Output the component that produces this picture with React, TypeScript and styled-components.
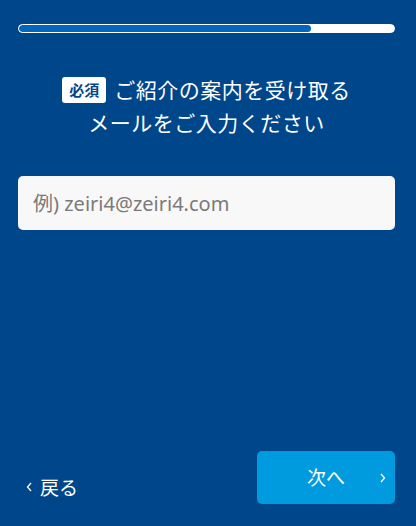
import React from 'react'
import styled, { createGlobalStyle } from 'styled-components'

const GlobalStyle = createGlobalStyle`
  html, body {
    margin: 0;
    padding: 0;
    background: #00468a;
  }
  * {
    box-sizing: border-box;
  }
`

const Page = styled.div`
  height: 526px;
  display: flex;
  flex-direction: column;
  padding: 24px 21px 22px 18px;
  background: #00468a;
  font-family: "Noto Sans", "Noto Sans CJK JP", sans-serif;
  color: #fff;
`
const Progress = styled.div`
  height: 9px;
  border-radius: 5px;
  background: #fff;
  border: 1px solid #fff;
  overflow: hidden;
`
const ProgressFill = styled.div`
  height: 100%;
  border-radius: 4px;
  background: #0066c0;
`
const Heading = styled.h1`
  margin: 41px 0 0;
  text-align: center;
  font-size: 21px;
  font-weight: 400;
  line-height: 33px;
  letter-spacing: 0.5px;
`
const Badge = styled.span`
  display: inline-block;
  vertical-align: 2px;
  margin-right: 8px;
  padding: 0 7px;
  height: 26px;
  line-height: 26px;
  border-radius: 3px;
  background: #fff;
  color: #00468a;
  font-size: 15px;
  font-weight: 700;
  letter-spacing: 0;
`
const EmailInput = styled.input`
  margin-top: 36px;
  width: 100%;
  height: 54px;
  border: none;
  border-radius: 5px;
  background: #f8f8f8;
  padding: 0 15px;
  font-family: "Noto Sans", "Noto Sans CJK JP", sans-serif;
  font-size: 20px;
  color: #333;
  outline: none;
  &::placeholder {
    color: #7a7a7a;
  }
`
const Spacer = styled.div`
  flex: 1;
`
const Footer = styled.div`
  display: flex;
  justify-content: space-between;
  align-items: flex-end;
`
const BackLink = styled.a`
  display: flex;
  align-items: center;
  gap: 8px;
  padding: 0 0 3px 8px;
  font-size: 19px;
  color: #fff;
  text-decoration: none;
`
const NextButton = styled.button`
  position: relative;
  width: 138px;
  height: 53px;
  border: none;
  border-radius: 5px;
  background: #009ade;
  color: #fff;
  font-family: "Noto Sans", "Noto Sans CJK JP", sans-serif;
  font-size: 19px;
  padding: 0 0 2px;
`
const Chevron = styled.svg`
  position: absolute;
  right: 9px;
  top: 50%;
  margin-top: -5px;
`

export default function App() {
  return (
    <Page>
      <GlobalStyle />
      <Progress>
        <ProgressFill style={{ width: `${(293 / 376) * 100}%` }} />
      </Progress>
      <Heading>
        <Badge>必須</Badge>ご紹介の案内を受け取る
        <br />
        メールをご入力ください
      </Heading>
      <EmailInput type="email" placeholder="例) zeiri4@zeiri4.com" />
      <Spacer />
      <Footer>
        <BackLink href="#">
          <svg width="6" height="10" viewBox="0 0 6 10" fill="none">
            <path d="M5 1 1.5 5 5 9" stroke="#fff" strokeWidth="1.3" />
          </svg>
          戻る
        </BackLink>
        <NextButton>
          次へ
          <Chevron width="6" height="10" viewBox="0 0 6 10" fill="none">
            <path d="M1 1 4.5 5 1 9" stroke="#fff" strokeWidth="1.3" />
          </Chevron>
        </NextButton>
      </Footer>
    </Page>
  )
}
